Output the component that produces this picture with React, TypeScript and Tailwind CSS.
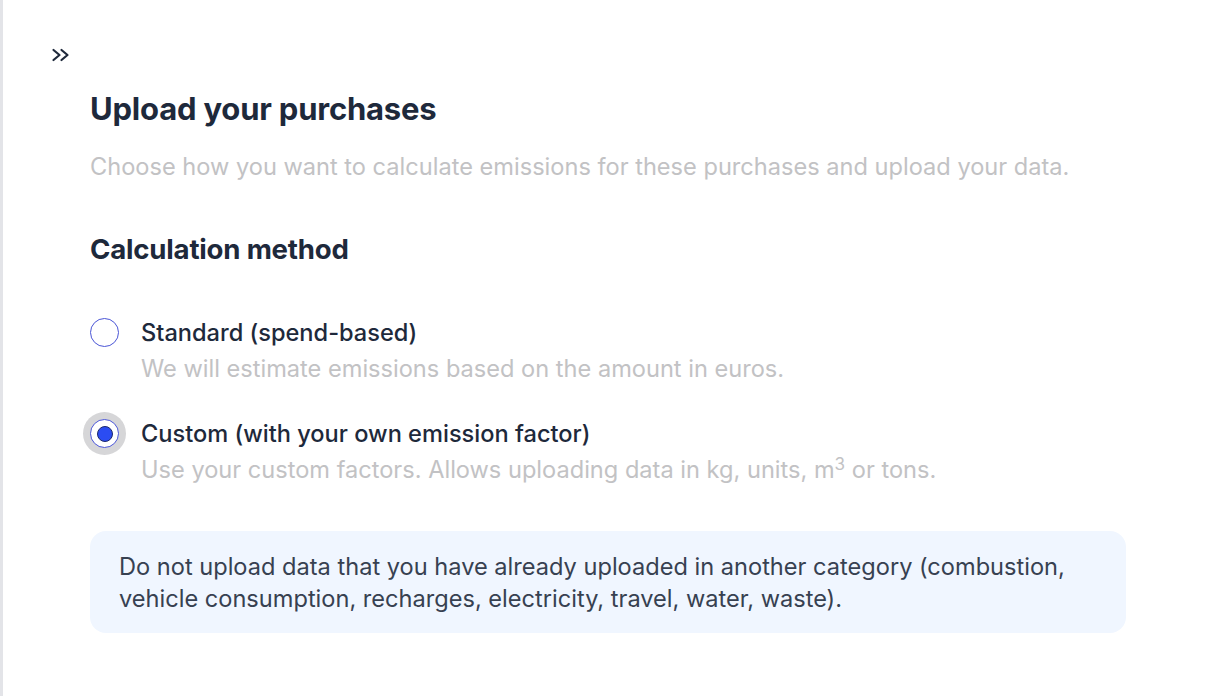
import React from "react";

export default function App() {
  return (
    <div className="w-[1212px] h-[696px] bg-white flex overflow-hidden" style={{ fontFamily: "Inter, 'Noto Sans', sans-serif" }}>
      <div className="w-[3px] h-full bg-[#e3e4e8] shrink-0" />
      <div className="flex-1 flex flex-col">
        <div className="pl-[48px] pt-[48px] h-[62px]">
          <svg width="20" height="14" viewBox="0 0 20 14" fill="none" stroke="#1e293b" strokeWidth="2.2" strokeLinecap="round" strokeLinejoin="round">
            <path d="M2.5 2 L8.5 7 L2.5 12" />
            <path d="M10.5 2 L16.5 7 L10.5 12" />
          </svg>
        </div>
        <div className="pl-[87px] pr-[83px] pt-[27px] flex flex-col">
          <h1 className="text-[31px] leading-[40px] font-bold text-[#1e293b] tracking-[-0.2px]">Upload your purchases</h1>
          <p className="mt-[22px] text-[23.6px] leading-[32px] text-[#c2c2c4]">
            Choose how you want to calculate emissions for these purchases and upload your data.
          </p>
          <h2 className="mt-[48px] text-[27.6px] leading-[36px] font-bold text-[#1e293b] tracking-[-0.2px]">Calculation method</h2>

          <div className="mt-[49px] flex flex-col gap-[31px]">
            <div className="flex items-start gap-[22px]">
              <div className="w-[29px] h-[29px] mt-[2px] rounded-full border-[1.5px] border-[#4a55d6] bg-white shrink-0" />
              <div className="flex flex-col">
                <span className="text-[23.6px] leading-[34px] font-medium text-[#1e293b]">Standard (spend-based)</span>
                <span className="text-[23.6px] leading-[34px] text-[#c2c2c4] mt-[2px]">We will estimate emissions based on the amount in euros.</span>
              </div>
            </div>
            <div className="flex items-start gap-[22px]">
              <div className="w-[29px] h-[29px] mt-[2px] rounded-full border-[1.5px] border-[#4a55d6] bg-white shrink-0 flex items-center justify-center shadow-[0_0_0_7px_#d6d6d8]">
                <div className="w-[16px] h-[16px] rounded-full bg-[#2b4cf2] border border-[#1e2a6b]" />
              </div>
              <div className="flex flex-col">
                <span className="text-[23.6px] leading-[34px] font-medium text-[#1e293b]">Custom (with your own emission factor)</span>
                <span className="text-[23.6px] leading-[34px] text-[#c2c2c4] mt-[2px]">
                  Use your custom factors. Allows uploading data in kg, units, m<sup className="text-[17px]">3</sup> or tons.
                </span>
              </div>
            </div>
          </div>

          <div className="mt-[44px] mr-[3px] rounded-[16px] bg-[#f0f6ff] pl-[29px] pr-[40px] pt-[20px] pb-[18px]">
            <p className="text-[23.6px] leading-[32px] text-[#374151]">
              Do not upload data that you have already uploaded in another category (combustion, vehicle consumption, recharges, electricity, travel, water, waste).
            </p>
          </div>
        </div>
      </div>
    </div>
  );
}
